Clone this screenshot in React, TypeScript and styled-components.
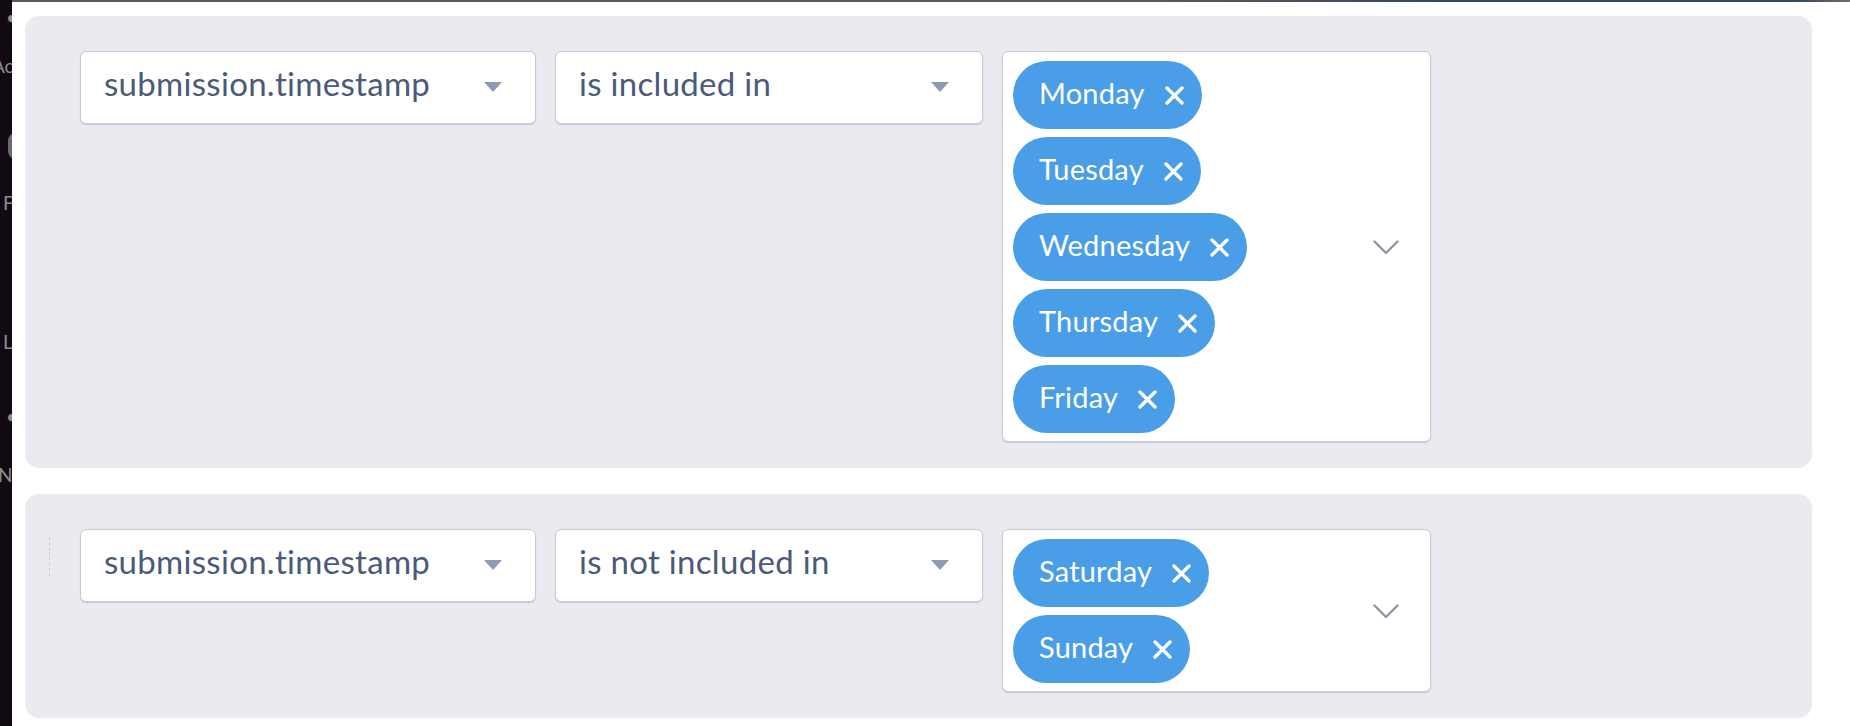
import React from "react";
import styled, { createGlobalStyle } from "styled-components";

const Global = createGlobalStyle`
  html, body { margin: 0; padding: 0; background: #ffffff; }
  body { font-family: "Lato", "Open Sans", sans-serif; }
  * { box-sizing: border-box; }
`;

const Page = styled.div`
  display: flex;
  width: 1850px;
  height: 726px;
  background: #ffffff;
  overflow: hidden;
`;

const Sidebar = styled.aside`
  width: 12px;
  flex-shrink: 0;
  background: #120a12;
  display: flex;
  flex-direction: column;
  overflow: hidden;
  color: #8c8c8c;
  font-family: "Lato", sans-serif;
  font-size: 19px;
  line-height: 20px;
`;

const SideMark = styled.div<{ $mt: number; $shift?: number }>`
  margin-top: ${(p) => p.$mt}px;
  margin-left: ${(p) => p.$shift ?? 0}px;
  white-space: nowrap;
  height: 20px;
`;

const SidePill = styled.div`
  margin-top: 57px;
  margin-left: 8px;
  width: 20px;
  height: 26px;
  border-radius: 8px;
  background: #6c6c6c;
`;

const Main = styled.main`
  flex: 1;
  display: flex;
  flex-direction: column;
  min-width: 0;
`;

const TopLine = styled.div`
  height: 2px;
  background: linear-gradient(
    to right,
    #5a5a5a 0%,
    #595a5c 62%,
    #34465e 78%,
    #34465e 97%,
    #6e6e6e 100%
  );
`;

const Content = styled.div`
  display: flex;
  flex-direction: column;
  gap: 26px;
  padding: 14px 38px 0 13px;
`;

const Panel = styled.section`
  background: #e9ebf0;
  border-radius: 14px;
  padding: 35px 0 26px 24px;
  display: flex;
  align-items: flex-start;
`;

const Handle = styled.div<{ $visible: boolean }>`
  width: 31px;
  flex-shrink: 0;
  align-self: flex-start;
  margin-top: 8px;
  height: 39px;
  border-left: 1px dashed ${(p) => (p.$visible ? "#c9cdd6" : "transparent")};
`;

const Row = styled.div`
  display: flex;
  align-items: flex-start;
  gap: 19px;
`;

const Select = styled.div<{ $width: number }>`
  width: ${(p) => p.$width}px;
  height: 73px;
  background: #ffffff;
  border: 1px solid #c5cad5;
  border-radius: 6px;
  box-shadow: 0 1px 1px rgba(110, 122, 145, 0.3);
  display: flex;
  align-items: center;
  justify-content: space-between;
  padding: 0 33px 0 23px;
  color: #4a5a78;
  font-size: 33px;
  letter-spacing: 0.3px;
`;

const SelectLabel = styled.span`
  margin-bottom: 9px;
  white-space: nowrap;
`;

const Caret = styled.span`
  width: 0;
  height: 0;
  border-left: 9px solid transparent;
  border-right: 9px solid transparent;
  border-top: 10px solid #8e9ab0;
  margin-bottom: 2px;
`;

const MultiBox = styled.div`
  width: 429px;
  background: #ffffff;
  border: 1px solid #c5cad5;
  border-radius: 6px;
  box-shadow: 0 1px 1px rgba(110, 122, 145, 0.3);
  display: flex;
  align-items: center;
  padding: 9px 0 8px 10px;
`;

const ChipList = styled.div`
  flex: 1;
  display: flex;
  flex-direction: column;
  align-items: flex-start;
  gap: 8px;
`;

const Chip = styled.span`
  height: 68px;
  border-radius: 34px;
  background: #4a9ee7;
  color: #ffffff;
  display: inline-flex;
  align-items: center;
  gap: 20px;
  padding: 0 18px 0 26px;
  font-size: 29px;
  letter-spacing: 0.2px;
  white-space: nowrap;
`;

const ChipLabel = styled.span`
  margin-bottom: 6px;
`;

const ChevronWrap = styled.span`
  display: flex;
  margin-right: 31px;
`;

const CloseIcon = () => (
  <svg width="19" height="19" viewBox="0 0 19 19" aria-hidden="true">
    <path d="M2 2 L17 17 M17 2 L2 17" stroke="#ffffff" strokeWidth="3.3" strokeLinecap="round" />
  </svg>
);

const Chevron = () => (
  <svg width="26" height="15" viewBox="0 0 26 15" aria-hidden="true">
    <path d="M1.5 1.5 L13 13 L24.5 1.5" fill="none" stroke="#8e96a4" strokeWidth="2.4" strokeLinecap="round" strokeLinejoin="round" />
  </svg>
);

type Filter = { field: string; op: string; values: string[]; handle: boolean };

const filters: Filter[] = [
  {
    field: "submission.timestamp",
    op: "is included in",
    values: ["Monday", "Tuesday", "Wednesday", "Thursday", "Friday"],
    handle: false,
  },
  {
    field: "submission.timestamp",
    op: "is not included in",
    values: ["Saturday", "Sunday"],
    handle: true,
  },
];

export default function App() {
  return (
    <>
      <Global />
      <Page>
        <Sidebar>
          <SideMark $mt={8} $shift={6}>•</SideMark>
          <SideMark $mt={28} $shift={-8}>Ac</SideMark>
          <SidePill />
          <SideMark $mt={34} $shift={3}>F</SideMark>
          <SideMark $mt={119} $shift={3}>L</SideMark>
          <SideMark $mt={55} $shift={6}>•</SideMark>
          <SideMark $mt={38} $shift={-2}>N</SideMark>
        </Sidebar>
        <Main>
          <TopLine />
          <Content>
            {filters.map((f, i) => (
              <Panel key={i}>
                <Handle $visible={f.handle} />
                <Row>
                  <Select $width={456}>
                    <SelectLabel>{f.field}</SelectLabel>
                    <Caret />
                  </Select>
                  <Select $width={428}>
                    <SelectLabel>{f.op}</SelectLabel>
                    <Caret />
                  </Select>
                  <MultiBox>
                    <ChipList>
                      {f.values.map((v) => (
                        <Chip key={v}>
                          <ChipLabel>{v}</ChipLabel>
                          <CloseIcon />
                        </Chip>
                      ))}
                    </ChipList>
                    <ChevronWrap>
                      <Chevron />
                    </ChevronWrap>
                  </MultiBox>
                </Row>
              </Panel>
            ))}
          </Content>
        </Main>
      </Page>
    </>
  );
}
